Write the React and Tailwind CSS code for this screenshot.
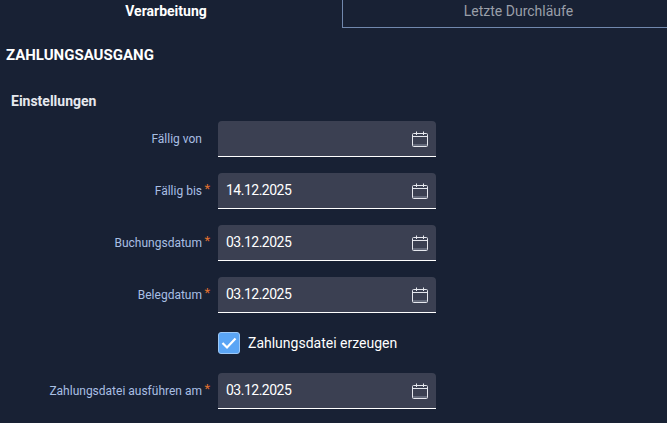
import React from 'react';

const font = { fontFamily: 'Roboto, sans-serif' };

const CalendarIcon = () => (
  <svg width="16" height="16" viewBox="0 0 16 16" fill="none" stroke="#e6e8ee" strokeWidth="1">
    <rect x="0.5" y="2.5" width="15" height="13" rx="1" />
    <path d="M0.5 5.5H15.5M4.5 0.5V4M11.5 0.5V4" />
    <path d="M1 14H15" stroke="#8d93a3" />
  </svg>
);

const DateField = ({ label, value, required }) => (
  <div className="flex items-center h-9">
    <div className="w-[218px] shrink-0 flex justify-end pr-2">
      <span className="text-[12px] text-[#a9bfe3]">{label}</span>
      <span className="w-2 text-[13px] leading-[14px] text-[#e0702f] text-right h-4">{required ? '*' : ''}</span>
    </div>
    <div className="w-[218px] h-9 flex items-center justify-between pl-2 pr-2 bg-[#3b4052] border-b border-white rounded-t-sm">
      <span className="text-[14px] tracking-[-0.5px] text-white">{value}</span>
      <CalendarIcon />
    </div>
  </div>
);

export default function App() {
  return (
    <div className="w-[667px] h-[423px] overflow-hidden bg-[#182134] text-white" style={font}>
      <div className="flex h-7">
        <div className="w-[342px] shrink-0 flex justify-center pr-[10px] pt-[1px] text-[14px] font-bold">Verarbeitung</div>
        <div className="w-[352px] shrink-0 flex justify-center pt-[1px] text-[14px] text-[#9a9fa9] border-l border-b border-[#7188ad]">
          Letzte Durchläufe
        </div>
      </div>
      <h1 className="mt-[17px] ml-[6px] text-[15px] leading-5 font-bold">ZAHLUNGSAUSGANG</h1>
      <h2 className="mt-[26px] ml-[11px] text-[14px] leading-5 font-bold text-[#e6e8ee]">Einstellungen</h2>
      <div className="mt-[10px] flex flex-col gap-4">
        <DateField label="Fällig von" value="" />
        <DateField label="Fällig bis" value="14.12.2025" required />
        <DateField label="Buchungsdatum" value="03.12.2025" required />
        <DateField label="Belegdatum" value="03.12.2025" required />
        <div className="flex items-center h-7 pl-[218px] gap-2">
          <div className="w-[22px] h-[22px] rounded-[3px] bg-[#5aa5f5] border border-[#9cc8f7] flex items-center justify-center">
            <svg width="16" height="14" viewBox="0 0 16 14" fill="none" stroke="white" strokeWidth="2.2">
              <path d="M1.5 7L6 11.5L14.5 2.5" />
            </svg>
          </div>
          <span className="text-[14px]">Zahlungsdatei erzeugen</span>
        </div>
        <DateField label="Zahlungsdatei ausführen am" value="03.12.2025" required />
      </div>
    </div>
  );
}
